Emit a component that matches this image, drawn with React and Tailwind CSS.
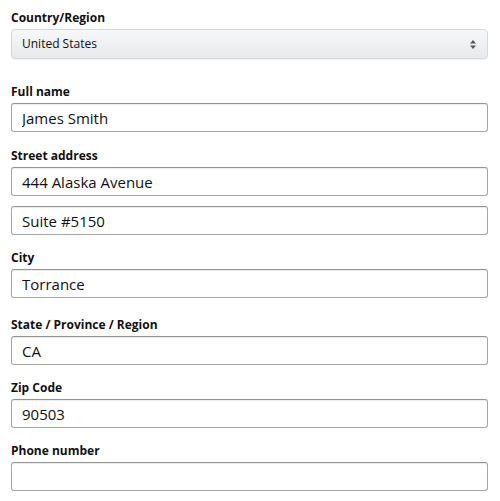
import React from "react";

// --- Address form fields ---
const fields = [
  { label: "Full name", values: ["James Smith"], mt: "mt-[24px]" },
  { label: "Street address", values: ["444 Alaska Avenue", "Suite #5150"], mt: "mt-[15px]" },
  { label: "City", values: ["Torrance"], mt: "mt-[14px]" },
  { label: "State / Province / Region", values: ["CA"], mt: "mt-[18px]" },
  { label: "Zip Code", values: ["90503"], mt: "mt-[14px]" },
  { label: "Phone number", values: [""], mt: "mt-[14px]" },
];

const labelClass =
  "block text-[12px] leading-[16px] font-bold text-[#111] pt-[1px] mb-[3px] font-['Open_Sans',sans-serif]";

const inputClass =
  "block w-full h-[29px] px-[10px] rounded-[3px] border border-[#a6a6a6] border-t-[#949494] bg-white text-[15px] text-[#111] shadow-[0_1px_0_rgba(255,255,255,0.5),inset_0_1px_0_rgba(0,0,0,0.07)] outline-none font-['Open_Sans',sans-serif]";

const App = () => {
  return (
    <div className="w-[500px] h-[501px] bg-white pt-[9px] pl-[11px] pr-[12px] overflow-hidden">
      {/* COUNTRY SELECT */}
      <label className={labelClass}>Country/Region</label>
      <div className="flex items-center justify-between h-[30px] px-[10px] rounded-[4px] border border-[#d5d9d9] bg-gradient-to-b from-[#f7f8fa] to-[#e7e9ec] shadow-[0_1px_0_rgba(0,0,0,0.05)]">
        <span className="text-[12px] text-[#111] font-['Open_Sans',sans-serif]">United States</span>
        <svg width="6" height="9" viewBox="0 0 6 9" className="mr-[1px]">
          <path d="M3 0L6 3.5H0Z" fill="#555" />
          <path d="M3 9L6 5.5H0Z" fill="#555" />
        </svg>
      </div>

      {/* TEXT FIELDS */}
      {fields.map((field) => (
        <div key={field.label} className={field.mt}>
          <label className={labelClass}>{field.label}</label>
          <div className="flex flex-col gap-[10px]">
            {field.values.map((v, i) => (
              <input key={i} className={inputClass} defaultValue={v} readOnly />
            ))}
          </div>
        </div>
      ))}
    </div>
  );
};

export default App;
